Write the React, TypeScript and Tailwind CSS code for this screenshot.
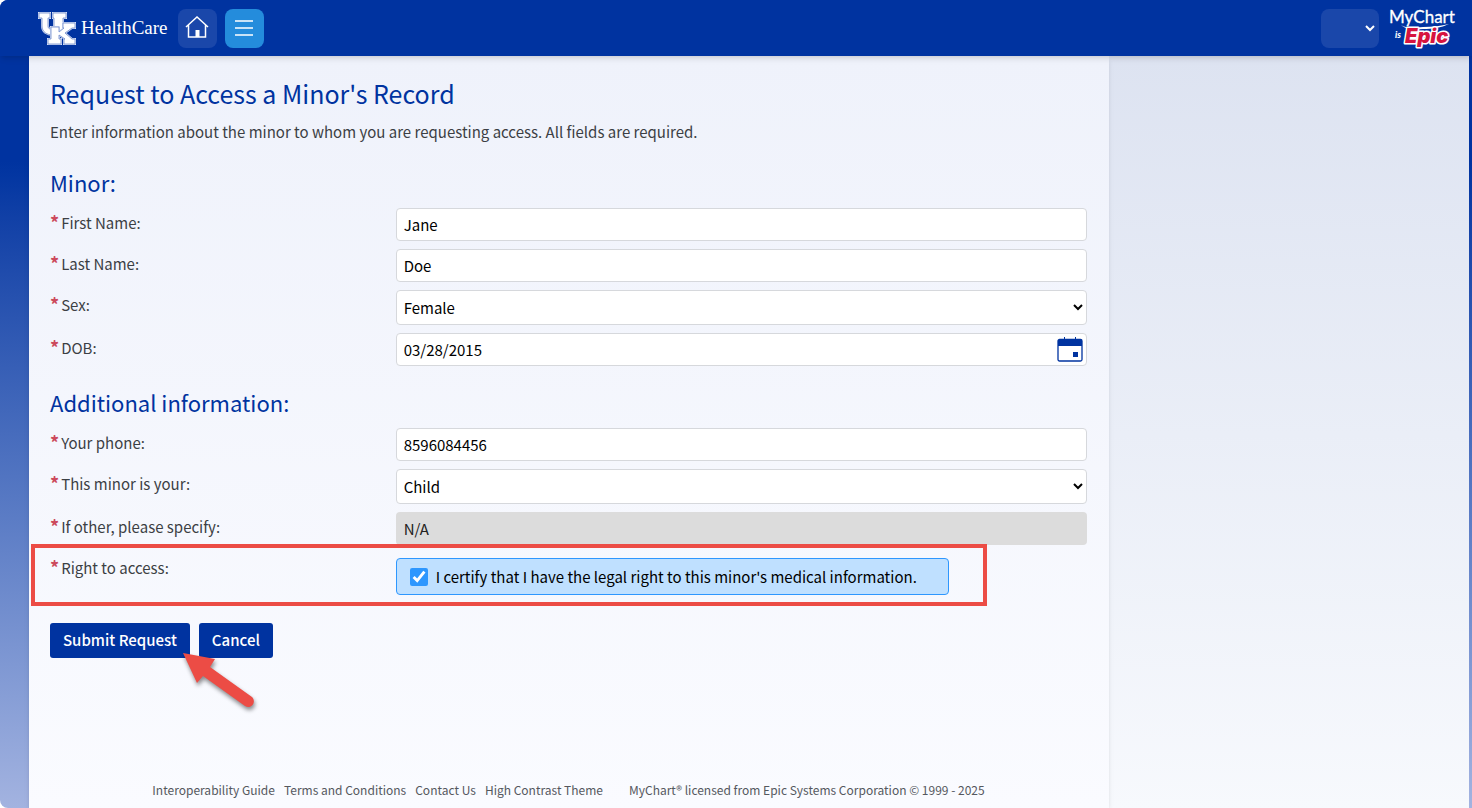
import React from 'react';

interface FieldProps {
  id: string;
  label: string;
  children: React.ReactNode;
}

const inputClass =
  'block h-[33px] w-full rounded-sm border border-[#d6d8dc] bg-white px-[7px] text-[15px] text-black';

const selectClass =
  'block h-[35px] w-full rounded-sm border border-[#d6d8dc] bg-white px-[3px] text-[15px] text-black';

const buttonClass = 'h-[35px] rounded-[3px] bg-[#0033a0] px-[13px] text-[15px] font-medium text-white';

function Field({ id, label, children }: FieldProps) {
  return (
    <div className="grid grid-cols-[1fr_2fr]">
      <label htmlFor={id} className="flex items-start gap-[2px] pt-1 text-[15px] leading-[22px]">
        <span className="text-[18px] leading-[20px] font-bold text-[#cc4a5c]">*</span>
        {label}
      </label>
      {children}
    </div>
  );
}

const U_PATH =
  'M1 1h11v5h-2v8c0 2 1 3 3 3s3-1 3-3V6h-1V1h13v5h-3v8c0 6-4 9-10 9S4 20 4 14V6H1z';
const K_PATH =
  'M13 15h8v5l5-4h-1v-5h12v5h-3l-7 5 7 6h3v5H26v-5h1l-6-4v4h2v5H10v-5h3z';

function UkLogo() {
  return (
    <svg width="39" height="33" viewBox="0 0 39 33" aria-hidden="true">
      {[U_PATH, K_PATH].map((d) => (
        <g key={d}>
          <path d={d} fill="#fff" stroke="#d5def3" strokeWidth="2" />
          <path d={d} fill="#fff" stroke="#6e8acb" strokeWidth="0.800" />
        </g>
      ))}
    </svg>
  );
}

function EpicLogo() {
  return (
    <svg width="74" height="46" viewBox="0 0 74 46" role="img" aria-label="MyChart is Epic">
      <text x="1" y="18" fontFamily="Lato, sans-serif" fontSize="17" fill="#fff" stroke="#fff" strokeWidth="0.3">
        MyChart
      </text>
      <path d="M13 20c4 3 12 3 22 2 10 0 18-1 26-3-8 4-17 5-26 5-10 1-18 0-22-4z" fill="#fff" />
      <text x="7" y="33" fontFamily="Lato, sans-serif" fontSize="9" fontWeight="900" fontStyle="italic" fill="#fff">
        is
      </text>
      <text
        x="17"
        y="38"
        fontFamily="Inter, sans-serif"
        fontSize="20"
        fontWeight="900"
        fontStyle="italic"
        fill="#d6143f"
        stroke="#fff"
        strokeWidth="3"
        strokeLinejoin="round"
        paintOrder="stroke"
      >
        Epic
      </text>
    </svg>
  );
}

export default function App() {
  return (
    <div className="bg-white font-['Noto_Sans_CJK_JP',sans-serif] text-[#3c3f44]">
      <div className="flex min-h-screen flex-col overflow-hidden rounded-l-lg bg-linear-to-b from-[#0033a0] from-20% to-[#a3b3e0]">
        <header className="z-10 flex h-14 items-center bg-[#0033a0] pr-[10px] pl-[38px] shadow-md">
          <a href="#" className="flex items-center gap-1 text-white">
            <UkLogo />
            <span className="font-['Liberation_Serif',serif] text-[19px]">HealthCare</span>
          </a>
          <button type="button" aria-label="Home" className="ml-[10px] grid size-[39px] place-items-center rounded-lg bg-[#1a47aa]">
            <svg width="24" height="24" viewBox="0 0 24 24" fill="none" stroke="#fff" strokeWidth="1.5">
              <path d="M1 11 12 1l11 10M3.500 9v12h17V9" />
              <path d="M10.500 14h4v7h-4z" fill="#fff" stroke="none" />
            </svg>
          </button>
          <button type="button" aria-label="Menu" className="ml-2 grid size-[39px] place-items-center rounded-lg bg-[#248cdc]">
            <svg width="18" height="18" viewBox="0 0 18 18" stroke="#fff" strokeWidth="1.5">
              <path d="M0 2h18M0 9h18M0 16h18" />
            </svg>
          </button>
          <button type="button" aria-label="Account menu" className="ml-auto flex h-[39px] w-[58px] items-center justify-end rounded-lg bg-[#1a47aa] pr-1">
            <svg width="10" height="7" viewBox="0 0 10 7" fill="none" stroke="#fff" strokeWidth="2">
              <path d="m1 1 4 4 4-4" />
            </svg>
          </button>
          <a href="#" className="ml-[9px]">
            <EpicLogo />
          </a>
        </header>

        <div className="flex flex-1 pr-[3px] pl-[29px]">
          <main className="z-[1] flex w-full max-w-[1080px] flex-col bg-linear-to-b from-[#eff2fb] to-[#fafbff] pt-[18px] pr-[22px] pl-[21px] shadow-md">
            <h1 className="text-[25px] leading-[38px] text-[#0033a0]">Request to Access a Minor's Record</h1>
            <p className="mt-[9px] text-[15px] leading-[22px]">
              Enter information about the minor to whom you are requesting access. All fields are required.
            </p>

            <form onSubmit={(e) => e.preventDefault()}>
              <h2 className="mt-[23px] text-[22px] leading-8 text-[#0033a0]">Minor:</h2>
              <div className="mt-[10px] grid gap-2">
                <Field id="first" label="First Name:">
                  <input id="first" defaultValue="Jane" className={inputClass} />
                </Field>
                <Field id="last" label="Last Name:">
                  <input id="last" defaultValue="Doe" className={inputClass} />
                </Field>
                <Field id="sex" label="Sex:">
                  <select id="sex" defaultValue="Female" className={selectClass}>
                    <option>Female</option>
                    <option>Male</option>
                  </select>
                </Field>
                <Field id="dob" label="DOB:">
                  <div className="relative">
                    <input id="dob" defaultValue="03/28/2015" className={inputClass} />
                    <button type="button" aria-label="Open calendar" className="absolute top-1 right-1">
                      <svg width="26" height="25" viewBox="0 0 26 25">
                        <rect x="1" y="2.500" width="24" height="21.500" rx="1.500" fill="#fff" stroke="#0033a0" strokeWidth="1.300" />
                        <path d="M1 3h24v6H1zM7 0h1v3H7zM18 0h1v3h-1zM16 15h5v5h-5z" fill="#0033a0" />
                      </svg>
                    </button>
                  </div>
                </Field>
              </div>

              <h2 className="mt-5 text-[22px] leading-8 text-[#0033a0]">Additional information:</h2>
              <div className="mt-[10px] grid gap-2">
                <Field id="phone" label="Your phone:">
                  <input id="phone" defaultValue="8596084456" className={inputClass} />
                </Field>
                <Field id="relation" label="This minor is your:">
                  <select id="relation" defaultValue="Child" className={selectClass}>
                    <option>Child</option>
                    <option>Other</option>
                  </select>
                </Field>
                <Field id="other" label="If other, please specify:">
                  <input
                    id="other"
                    defaultValue="N/A"
                    disabled
                    className="block h-[33px] w-full rounded-sm bg-[#dcdcdc] px-2 text-[15px] text-[#222]"
                  />
                </Field>
                <div className="relative">
                  <Field id="certify" label="Right to access:">
                    <div className="pt-[5px]">
                      <label
                        htmlFor="certify"
                        className="flex h-[37px] w-[80%] items-center gap-2 rounded-sm border border-[#2e97fe] bg-[#bfe0ff] px-[13px] text-[15px] leading-[22px] text-black"
                      >
                        <input id="certify" type="checkbox" defaultChecked className="size-[18px] accent-[#2e97fe]" />
                        I certify that I have the legal right to this minor's medical information.
                      </label>
                    </div>
                  </Field>
                  {/* Callout around the certification row */}
                  <div className="pointer-events-none absolute -top-[9px] right-[100px] -bottom-[11px] -left-[19px] border-4 border-[#ec4c45]" />
                </div>
              </div>

              <div className="mt-7 flex gap-[9px]">
                <div className="relative">
                  <button type="submit" className={buttonClass}>
                    Submit Request
                  </button>
                  <svg
                    width="80"
                    height="68"
                    viewBox="0 0 80 68"
                    className="pointer-events-none absolute top-[25px] left-[128px] z-10 drop-shadow-[1px_3px_2px_rgba(0,0,0,0.45)]"
                  >
                    <path d="M5 5l32 6-5 8 42 30c5 5-1 13-7 9L25 28l-6 7z" fill="#ec4c45" />
                  </svg>
                </div>
                <button type="button" className={buttonClass}>
                  Cancel
                </button>
              </div>
            </form>

            <footer className="mt-auto flex justify-center gap-[26px] pb-2 text-[12px] leading-5 text-[#55585e]">
              <nav className="flex gap-[9px]">
                <a href="#">Interoperability Guide</a>
                <a href="#">Terms and Conditions</a>
                <a href="#">Contact Us</a>
                <a href="#">High Contrast Theme</a>
              </nav>
              <p>MyChart® licensed from Epic Systems Corporation © 1999 - 2025</p>
            </footer>
          </main>
          <aside className="flex-1 bg-linear-to-b from-[#dde3f1] to-[#f7f9fd]" />
        </div>
      </div>
    </div>
  );
}
